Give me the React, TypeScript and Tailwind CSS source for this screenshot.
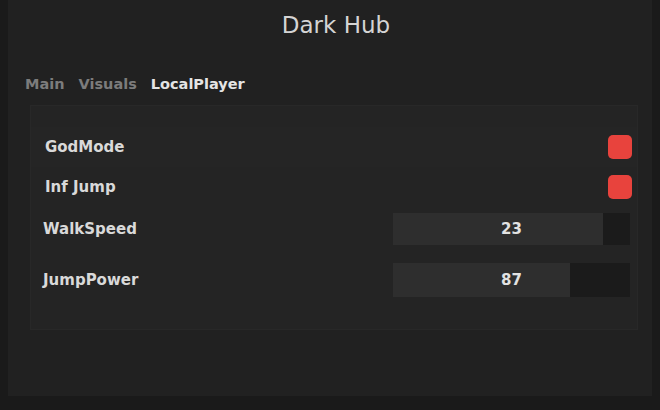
import React from 'react'

const font = { fontFamily: '"DejaVu Sans", "Liberation Sans", sans-serif' }

function Toggle({ on }: { on: boolean }) {
    return (
        <div className={`w-6 h-6 rounded-[5px] ${on ? 'bg-[#e8433d]' : 'bg-[#3a3a3a]'}`} />
    )
}

function Slider({ value, fill, height }: { value: number; fill: number; height: string }) {
    return (
        <div className={`relative w-[237px] ${height} bg-[#1b1b1b] flex`}>
            <div className="h-full bg-[#2e2e2e]" style={{ width: fill }} />
            <div className="absolute inset-0 flex items-center justify-center text-[15px] font-bold text-[#e2e2e2]">
                {value}
            </div>
        </div>
    )
}

export default function App() {
    const tabs = ['Main', 'Visuals', 'LocalPlayer']
    const active = 'LocalPlayer'

    return (
        <div className="w-[660px] h-[410px] bg-[#191919]" style={font}>
            <div className="h-full border-l-[8px] border-r-[8px] border-b-[14px] border-[#1a1a1a] bg-[#212121] flex flex-col">
                <div className="h-[50px] pl-3 flex items-center justify-center text-[23px] text-[#d4d4d4]">
                    Dark Hub
                </div>

                <div className="mt-[25px] h-5 pl-[17px] flex items-center gap-[14px] text-[14.5px] font-bold">
                    {tabs.map(tab => (
                        <span key={tab} className={tab === active ? 'text-[#e4e4e4]' : 'text-[#7c7c7c]'}>
                            {tab}
                        </span>
                    ))}
                </div>

                <div className="mt-[10px] ml-[22px] mr-[14px] h-[225px] bg-[#242424] border border-[#282828] pt-[21px] flex flex-col text-[15px] font-bold text-[#d9d9d9]">
                    <div className="h-10 pl-[14px] pr-[5px] flex items-center justify-between bg-[#252525]">
                        <span>GodMode</span>
                        <Toggle on />
                    </div>
                    <div className="h-10 pl-[14px] pr-[5px] flex items-center justify-between">
                        <span>Inf Jump</span>
                        <Toggle on />
                    </div>
                    <div className="pt-[6px] h-[50px] pl-[12px] pr-[7px] flex items-start justify-between">
                        <div className="h-8 flex items-center">WalkSpeed</div>
                        <Slider value={23} fill={210} height="h-8" />
                    </div>
                    <div className="pt-[6px] pl-[12px] pr-[7px] flex items-start justify-between">
                        <div className="h-[34px] flex items-center">JumpPower</div>
                        <Slider value={87} fill={177} height="h-[34px]" />
                    </div>
                </div>
            </div>
        </div>
    )
}
